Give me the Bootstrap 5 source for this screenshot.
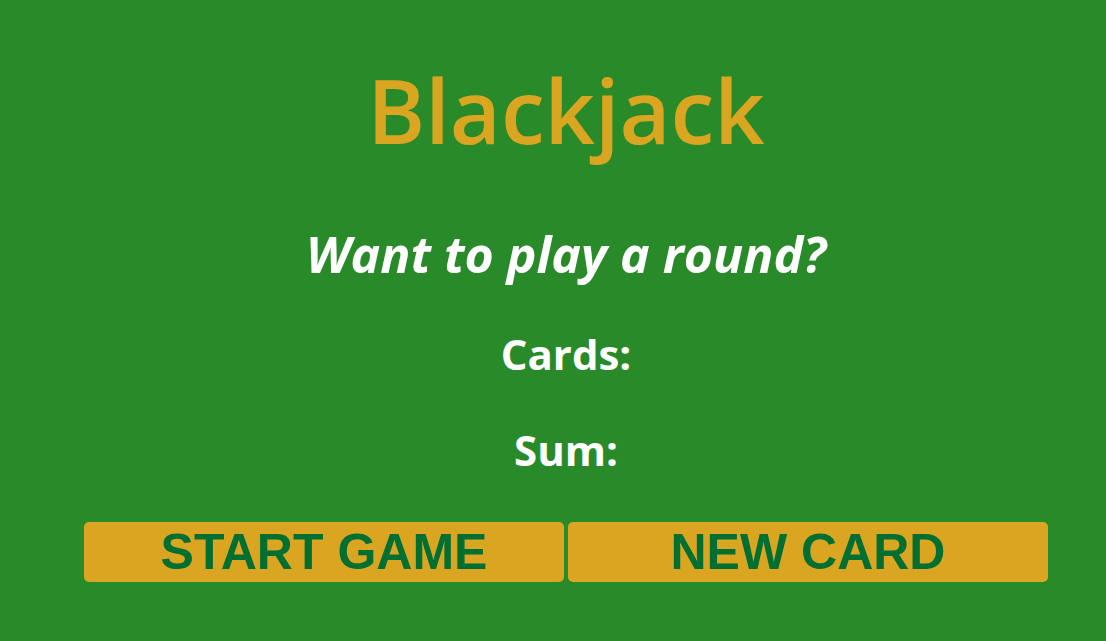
<!DOCTYPE html>
<html lang="en">
<head>
<meta charset="utf-8">
<meta name="viewport" content="width=device-width, initial-scale=1">
<title>Blackjack</title>
<link href="https://cdn.jsdelivr.net/npm/bootstrap@5.3.0/dist/css/bootstrap.min.css" rel="stylesheet">
<style>
body { background: #298a29; font-family: "Trebuchet MS", "Open Sans", sans-serif; }
.game { padding: 54px 58px 56px 84px; }
.game-title { color: #daa520; font-size: 88px; font-weight: 600; line-height: 112px; margin-bottom: 56px; }
.message { font-size: 50px; line-height: 64px; margin-bottom: 40px; }
.hand { font-size: 42px; line-height: 56px; margin-bottom: 40px; }
.actions { padding-top: 4px; }
.btn-game { background: #daa520; color: #016f32; font: bold 50px/60px "Liberation Sans", Arial, sans-serif; border: 0; border-radius: 5px; padding: 0; }
.btn-game:hover { background: #c8961a; color: #016f32; }
</style>
</head>
<body>
<main class="game text-center text-white">
<h1 class="game-title">Blackjack</h1>
<p class="message fw-bold fst-italic">Want to play a round?</p>
<p class="hand fw-bold">Cards:</p>
<p class="hand fw-bold">Sum:</p>
<div class="actions d-flex gap-1">
<button type="button" class="btn btn-game flex-fill w-50">START GAME</button>
<button type="button" class="btn btn-game flex-fill w-50">NEW CARD</button>
</div>
</main>
<script src="https://cdn.jsdelivr.net/npm/bootstrap@5.3.0/dist/js/bootstrap.bundle.min.js"></script>
</body>
</html>
